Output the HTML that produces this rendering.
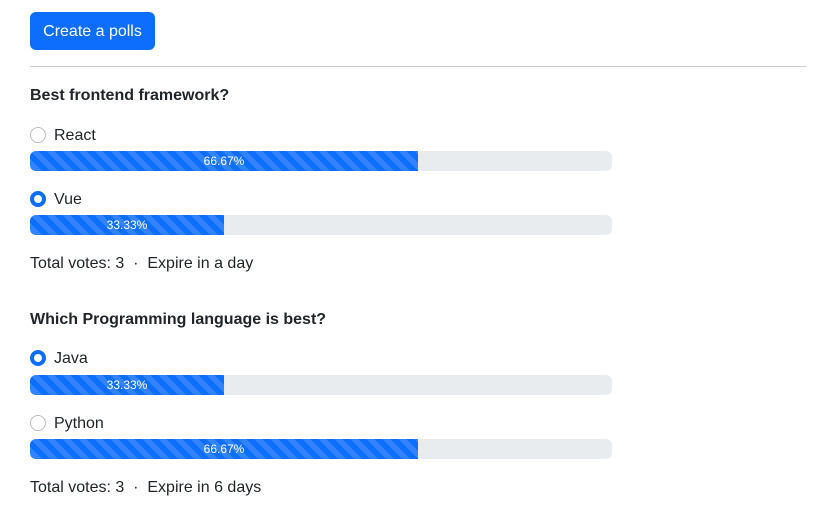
<!DOCTYPE html>
<html><head><style>
body{margin:0;width:826px;height:509px;background:#fff;font-family:"Liberation Sans",sans-serif;color:#212529;position:relative;overflow:hidden}
.a{position:absolute;white-space:nowrap}
.btn{left:30px;top:12px;width:125px;height:38px;background:#0d6efd;color:#fff;border-radius:6px;font-size:16px;line-height:40px;text-align:center}
.hr{left:30px;top:66px;width:776px;height:1px;background:#ccc}
.h{font-weight:bold;font-size:16px;left:30px;line-height:20px}
.t{font-size:16px;line-height:20px}
.r{left:30px;width:14px;height:14px;border:1px solid #bbb;border-radius:50%;box-sizing:content-box}
.r.on{width:8px;height:8px;border:4px solid #0d6efd;background:#fff;width:8px}
.p{left:30px;width:582px;height:20px;background:#e9ecef;border-radius:6px;overflow:hidden}
.b{height:100%;background-color:#0d6efd;background-image:linear-gradient(45deg,rgba(255,255,255,.15) 25%,transparent 25%,transparent 50%,rgba(255,255,255,.15) 50%,rgba(255,255,255,.15) 75%,transparent 75%,transparent);background-size:16px 16px;color:#fff;font-size:12px;line-height:20px;text-align:center}
</style></head><body>
<div class="a btn">Create a polls</div>
<div class="a hr"></div>
<div class="a h" style="top:86px">Best frontend framework?</div>
<div class="a r" style="top:127px"></div><div class="a t" style="left:54px;top:126px">React</div>
<div class="a p" style="top:151px"><div class="b" style="width:388px">66.67%</div></div>
<div class="a r on" style="top:191px"></div><div class="a t" style="left:54px;top:190px">Vue</div>
<div class="a p" style="top:215px"><div class="b" style="width:194px">33.33%</div></div>
<div class="a t" style="left:30px;top:254px">Total votes: 3 &nbsp;·&nbsp; Expire in a day</div>
<div class="a h" style="top:310px">Which Programming language is best?</div>
<div class="a r on" style="top:350px"></div><div class="a t" style="left:54px;top:349px">Java</div>
<div class="a p" style="top:375px"><div class="b" style="width:194px">33.33%</div></div>
<div class="a r" style="top:415px"></div><div class="a t" style="left:54px;top:414px">Python</div>
<div class="a p" style="top:439px"><div class="b" style="width:388px">66.67%</div></div>
<div class="a t" style="left:30px;top:478px">Total votes: 3 &nbsp;·&nbsp; Expire in 6 days</div>
</body></html>
